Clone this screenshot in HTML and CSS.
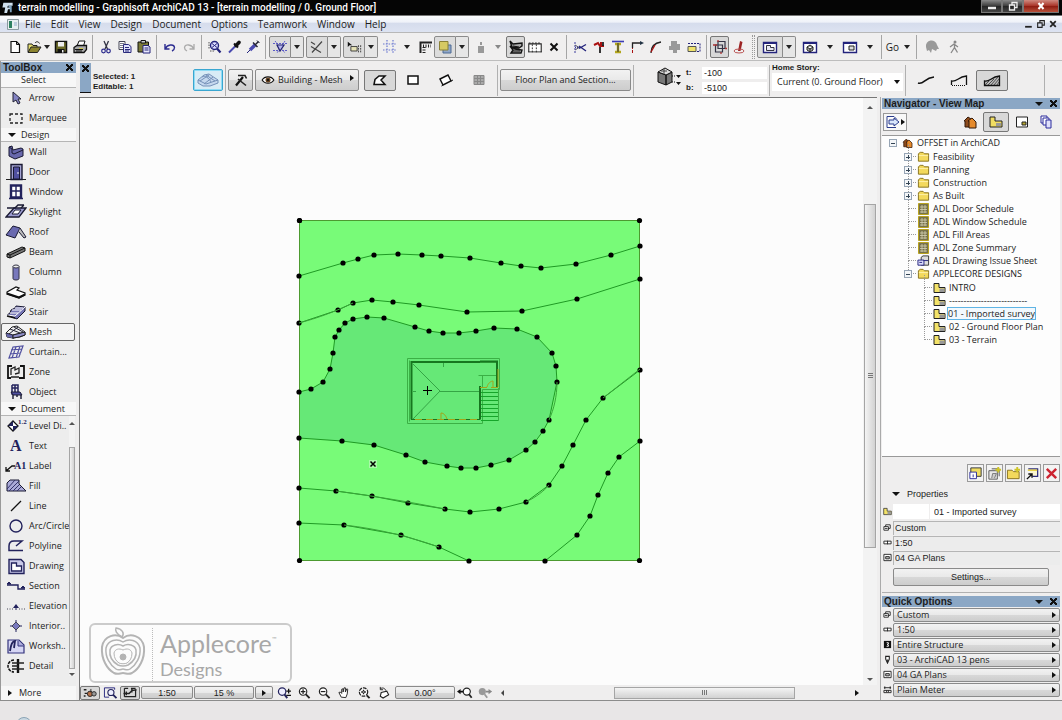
FILE: index.html
```html
<!DOCTYPE html>
<html lang="en">
<head>
  <meta charset="UTF-8" />
  <meta name="viewport" content="width=device-width, initial-scale=1.0" />
  <title>terrain modelling - Graphisoft ArchiCAD 13</title>
  <link rel="stylesheet" href="styles.css">
</head>
<body>
  <!-- icon sprite -->
  <svg class="sprite" width="0" height="0" aria-hidden="true">
    <defs>
      <symbol id="i-new" viewBox="0 0 16 16"><path d="M4 2.5h5.500l3 3v8H4z" fill="#fff" stroke="#111" stroke-width="1.200"/><path d="M9.500 2.500v3h3" fill="none" stroke="#111"/></symbol>
      <symbol id="i-open" viewBox="0 0 16 16"><path d="M2 13V5h4l1 1.500h4V8" fill="#e8e070" stroke="#222"/><path d="M2 13.500L5 8h10l-3.500 5.500z" fill="#8c8430" stroke="#222"/><path d="M9 4c1.500-2 3.500-1.500 4.500 0.500" fill="none" stroke="#222"/></symbol>
      <symbol id="i-save" viewBox="0 0 16 16"><path d="M2.500 2.500h11v11h-11z" fill="#6b6a28" stroke="#111" stroke-width="1.500"/><path d="M5 3h6v4.500H5z" fill="#eee"/><path d="M4.500 10h7v4h-7z" fill="#111"/><path d="M9 11h1.500v2.500H9z" fill="#eee"/></symbol>
      <symbol id="i-print" viewBox="0 0 16 16"><path d="M5 7l2-5h6l-1.500 5" fill="#fff" stroke="#111"/><path d="M2 8.500L5 6.500h9.500v4l-2.500 3H2z" fill="#aaa" stroke="#111" stroke-width="1.300"/><path d="M3 10.500h8M4 12h6" stroke="#111"/><path d="M7 9.500h4" stroke="#cfc84a"/></symbol>
      <symbol id="i-cut" viewBox="0 0 16 16"><path d="M6 2l3.500 8M10.500 2L7 10" stroke="#334" stroke-width="1.300"/><circle cx="5.500" cy="12" r="1.800" fill="none" stroke="#2a2a8c" stroke-width="1.200"/><circle cx="10.500" cy="12" r="1.800" fill="none" stroke="#2a2a8c" stroke-width="1.200"/></symbol>
      <symbol id="i-copy" viewBox="0 0 16 16"><path d="M2 2.500h6v8H2z" fill="#fff" stroke="#445"/><path d="M3 4.500h4M3 6.500h4M3 8.500h3" stroke="#778"/><path d="M6.500 5.500h5l2.500 2v6H6.500z" fill="#dfe0fb" stroke="#2a2a7c"/><path d="M8 8.500h4M8 10.500h5M8 12h4" stroke="#2a2a7c"/></symbol>
      <symbol id="i-paste" viewBox="0 0 16 16"><path d="M2 3h10.500v10H2z" fill="#7b7a38" stroke="#111"/><path d="M5 1.500h4.500v2.500H5z" fill="#ccc" stroke="#111"/><path d="M7 6.500h5l2 1.500v6H7z" fill="#e8e8fb" stroke="#23237c"/><path d="M8.500 9h4M8.500 11h4" stroke="#23237c"/></symbol>
      <symbol id="i-undo" viewBox="0 0 16 16"><path d="M3 5v5h4.500M3.500 9.500C5 5.500 12 4.500 12.500 8.500c0 2-1.500 3-2.500 3.500" fill="none" stroke="#2c2c90" stroke-width="1.400"/></symbol>
      <symbol id="i-redo" viewBox="0 0 16 16"><path d="M13 5v5H8.500M12.500 9.500C11 5.500 4 4.500 3.500 8.500c0 2 1.500 3 2.500 3.500" fill="none" stroke="#aaa" stroke-width="1.300"/></symbol>
      <symbol id="i-find" viewBox="0 0 16 16"><circle cx="7.500" cy="6.500" r="4" fill="#dcdcff" stroke="#23237c" stroke-width="1.400"/><path d="M10 9.500l3.500 4" stroke="#23237c" stroke-width="2.200"/><path d="M5 4.500l5 4M10 4.500l-5 4" stroke="#23237c"/><path d="M2 3v7M3 12h4" stroke="#555" stroke-dasharray="1.500 1"/></symbol>
      <symbol id="i-dropper" viewBox="0 0 16 16"><path d="M3 13.500l6-6" stroke="#4a4ab0" stroke-width="2"/><path d="M8 4.500l4 4" stroke="#111" stroke-width="2"/><path d="M10 6.500L13 3.500" stroke="#111" stroke-width="3.600" stroke-linecap="round"/></symbol>
      <symbol id="i-syringe" viewBox="0 0 16 16"><path d="M2 14l3-3" stroke="#23237c"/><path d="M5 11l5-5" stroke="#4a4ab0" stroke-width="3.400"/><path d="M8 3.500l4.500 4.500M10 6l3.500-3.500" stroke="#223" stroke-width="1.500"/><path d="M12 1.500l2.500 2.500" stroke="#223"/></symbol>
      <symbol id="i-guide" viewBox="0 0 16 16"><path d="M1 4.500h14M3 2l10 12M13 2L5 14M1 11.500h14" stroke="#5c5cc8" stroke-dasharray="2 1"/><path d="M5 6h7l-4 6z" fill="#b4b4ee" stroke="#222270" stroke-width="1.200"/></symbol>
      <symbol id="i-snap" viewBox="0 0 16 16"><path d="M2 7.500l10 6M3 13.500L13 2.500M2 3l4 2.500" fill="none" stroke="#444" stroke-width="1.200"/></symbol>
      <symbol id="i-ghost" viewBox="0 0 18 16"><path d="M2 2v6l2-2h3z" fill="#111"/><path d="M5.500 7.500h7v5h-7z" fill="#e7e4b8" stroke="#333"/><path d="M14 6v8M16.500 6v8" stroke="#333" stroke-dasharray="2 1"/></symbol>
      <symbol id="i-grid" viewBox="0 0 16 16"><path d="M5 1v14M11 1v14M1 5h14M1 11h14" stroke="#6a78d0" stroke-width="1.200" stroke-dasharray="1.500 1.300"/></symbol>
      <symbol id="i-ruler" viewBox="0 0 16 16"><path d="M3.500 14V3.500H15" fill="none" stroke="#222" stroke-width="2"/><path d="M6 7h8M7 8v6" fill="none" stroke="#222" stroke-dasharray="1 1.500" stroke-width="3"/></symbol>
      <symbol id="i-layers" viewBox="0 0 16 16"><path d="M6 6h8v8H6z" fill="#8fa6c8" stroke="#4c6a94"/><path d="M2.500 2.500h8.500v8.500H2.500z" fill="#d6c962" stroke="#8a8036"/></symbol>
      <symbol id="i-weight" viewBox="0 0 16 16"><path d="M5 7h6v7H5zM7 3h2v3H7z" fill="#999"/></symbol>
      <symbol id="i-roofs" viewBox="0 0 16 16"><path d="M2 2l3 3 9-1v3l-3 2-7-1zM2 7l5 3 7 1-1 3H3l2-3z" fill="#aaa" stroke="#111" stroke-width="1.400"/><path d="M5 7l6 1M4 12h8" stroke="#111"/></symbol>
      <symbol id="i-dims" viewBox="0 0 18 16"><path d="M2 14V4.500h14V14" fill="#fff" stroke="#222" stroke-width="1.200"/><path d="M2 3.500h14M6 5v9M10.500 5v9" stroke="#222" stroke-dasharray="2 1.500"/><path d="M1.500 13.500h15" stroke="#222"/></symbol>
      <symbol id="i-x" viewBox="0 0 16 16"><path d="M4.500 4.500l7 7M11.500 4.500l-7 7" stroke="#111" stroke-width="2"/></symbol>
      <symbol id="i-trim" viewBox="0 0 16 16"><path d="M3 3v11" stroke="#3b3b9c" stroke-dasharray="2 1"/><path d="M3 8.500h5" stroke="#3b3b9c" stroke-dasharray="1 1"/><path d="M7 9.500l7-4M7 7l7 5" stroke="#23237c" stroke-width="1.400"/><path d="M3 6l4 2.500-4 2.500" fill="none" stroke="#556"/></symbol>
      <symbol id="i-split" viewBox="0 0 16 16"><path d="M3 6l4-2 2 3h4M10 3v4" fill="none" stroke="#a11" stroke-width="2"/><path d="M9 8v6M12 3v4" stroke="#222" stroke-width="1.800"/></symbol>
      <symbol id="i-adjust" viewBox="0 0 16 16"><path d="M2 2.500h12" stroke="#3b3bb4" stroke-width="1.600"/><path d="M5 5h6M5 13h6M8 5v8" stroke="#b3a61c" stroke-width="2.400"/><path d="M8 4v9" stroke="#333"/></symbol>
      <symbol id="i-corner" viewBox="0 0 16 16"><path d="M3.500 14V4" stroke="#a11" stroke-dasharray="3 1"/><path d="M3.500 9V4h9" fill="none" stroke="#222" stroke-width="1.300"/><path d="M11 2l4 2-4 2z" fill="#234"/></symbol>
      <symbol id="i-fillet" viewBox="0 0 16 16"><path d="M3 14c0-6 3-10 10-11" fill="none" stroke="#222" stroke-width="1.300"/><path d="M3 13L7 6" stroke="#a11" stroke-width="1.300"/></symbol>
      <symbol id="i-solid" viewBox="0 0 16 16"><path d="M4 2h6v3h3v6h-3v3H6v-3H2V7h2z" fill="#999"/></symbol>
      <symbol id="i-stretch" viewBox="0 0 16 16"><path d="M2 7.500h8v5H2z" fill="#f0e36a" stroke="#555"/><path d="M2 4.500h12v8h-3" fill="none" stroke="#23237c" stroke-dasharray="2 1"/></symbol>
      <symbol id="i-group" viewBox="0 0 16 16"><path d="M6 2.500h7v7H6zM3.500 6h7v7h-7z" fill="none" stroke="#334" stroke-width="1.200"/><path d="M1 6h4M9 13v2M13 9.500h2M6 1v2" stroke="#a33" stroke-width="1.300"/></symbol>
      <symbol id="i-pen" viewBox="0 0 16 16"><path d="M7 12l2-10 2.500 1-2 9z" fill="#9c2222"/><ellipse cx="8" cy="12" rx="5" ry="2" fill="none" stroke="#b55"/></symbol>
      <symbol id="i-plan" viewBox="0 0 18 16"><path d="M2.500 3.500h13v10h-13z" fill="#fff" stroke="#23237c" stroke-width="1.400"/><path d="M2 4h14" stroke="#23237c" stroke-width="2"/><path d="M5.500 11.500v-5h4v2h3.500v3z" fill="#e6e6f4" stroke="#334"/></symbol>
      <symbol id="i-view3d" viewBox="0 0 18 16"><path d="M2.500 3.500h13v10h-13z" fill="#fff" stroke="#23237c" stroke-width="1.400"/><path d="M2 4h14" stroke="#23237c" stroke-width="2"/><path d="M6 8l3-2 3 2v3l-3 2-3-2zM6 8l3 2 3-2M9 10v3" fill="#aaa" stroke="#222"/></symbol>
      <symbol id="i-layout" viewBox="0 0 18 16"><path d="M2.500 3.500h13v10h-13z" fill="#fff" stroke="#23237c" stroke-width="1.400"/><path d="M2 4h14" stroke="#23237c" stroke-width="2"/><path d="M8 7h5v4H8z" fill="#ddd" stroke="#222"/></symbol>
      <symbol id="i-orbit" viewBox="0 0 16 16"><path d="M2 8a5.500 5.500 0 0 1 11-2l2 4h-2l-1 2-4-2-1 4-2-3-2 1z" fill="#999"/></symbol>
      <symbol id="i-walk" viewBox="0 0 16 16"><circle cx="9" cy="3" r="1.500" fill="#888"/><path d="M8.500 4.500v4l3 5M8.500 8.500L5 14M4 8l4-3 4 3" fill="none" stroke="#888" stroke-width="1.300"/></symbol>

      <symbol id="i-mesh" viewBox="0 0 22 16"><path d="M1 9l6-6 5-1 8 6v3l-5 2-7 1-6-1z" fill="#eee" stroke="#222"/><path d="M1 9l7 2v3l-6-1z" fill="#6868ac"/><path d="M1 9l7 2 12-3M5 5l10 4M9 3l9 5M4 10l9-7M8 11v4" fill="none" stroke="#223"/><path d="M8 11l12-3v3l-6 2-6 1z" fill="#8d8dc8" stroke="#222"/></symbol>
      <symbol id="i-meshbig" viewBox="0 0 22 16"><path d="M1 8l6-5 5-1 9 6v3l-8 3-7 0-5-3z" fill="#c5d8ee" stroke="#7591b8"/><path d="M1 8l8 4 12-4M5 5c3-2 7 1 9 5M9 3l9 6M3 9l9-6M7 12l9-7" fill="none" stroke="#7591b8"/></symbol>
      <symbol id="i-wand" viewBox="0 0 16 16"><path d="M3 13.500L10 5" stroke="#111" stroke-width="2.200"/><path d="M5 3.500h7l1.500 3M5 7l8 6.500" fill="none" stroke="#222" stroke-width="1.600"/></symbol>
      <symbol id="i-eye" viewBox="0 0 16 12"><path d="M1 6c3-5 11-5 14 0-3 5-11 5-14 0z" fill="#fff" stroke="#111" stroke-width="1.400"/><circle cx="8" cy="6" r="3" fill="#6a4420"/><circle cx="8" cy="6" r="1.400" fill="#111"/></symbol>
      <symbol id="i-poly" viewBox="0 0 18 16"><path d="M3 12.500l1-5 4-3.500h6l-4 4 4 4.500z" fill="#fff" stroke="#111" stroke-width="1.500"/></symbol>
      <symbol id="i-rect" viewBox="0 0 18 16"><path d="M4 4h10v8H4z" fill="#fff" stroke="#111" stroke-width="1.500"/></symbol>
      <symbol id="i-rot" viewBox="0 0 18 16"><path d="M3 7l8-4 3 6-8 4z" fill="#fff" stroke="#111" stroke-width="1.400"/><path d="M14 9l2-1M6 13l-1.500 1" stroke="#111"/></symbol>
      <symbol id="i-table" viewBox="0 0 18 16"><path d="M4 3.500h10v9H4z" fill="#aaa" stroke="#888"/><path d="M7.500 4v8M10.500 4v8M4 6.500h10M4 9.500h10" stroke="#888"/></symbol>
      <symbol id="i-block" viewBox="0 0 26 20"><path d="M2 6l8 3v10l-8-3zM10 9l6-3v10l-6 3z" fill="#777" stroke="#111"/><path d="M2 6l7-4 7 4-6 3z" fill="#ddd" stroke="#111"/><path d="M5 5h6M8 3v5" stroke="#444"/><path d="M16 10h4M16 16h4" stroke="#111" stroke-dasharray="1 1"/><path d="M20 9h5l-2.500 3zM20 16h5l-2.500 3z" fill="#111"/></symbol>
      <symbol id="i-curve" viewBox="0 0 18 16"><path d="M1 11c6 2 6-5 16-6" fill="none" stroke="#111" stroke-width="1.600"/></symbol>
      <symbol id="i-skirt" viewBox="0 0 18 16"><path d="M1.500 13V9c6 1 6-4 15-5v9" fill="none" stroke="#111" stroke-width="1.300"/><path d="M2 13.500h14" stroke="#111" stroke-dasharray="1 1"/></symbol>
      <symbol id="i-solidmesh" viewBox="0 0 18 16"><path d="M1.500 13.500V9c6 1 6-4 15-5v9.500z" fill="#bbb" stroke="#111" stroke-width="1.300"/><path d="M2 13l4-4M5 13l6-6M8 13l7-8M11 13l5-6M14 13l2-3" stroke="#333" stroke-width=".8"/></symbol>

      <symbol id="t-arrow" viewBox="0 0 22 18"><path d="M8 3v10l3-2 2 4 2-1-2-4h3z" fill="#8484c4" stroke="#223"/></symbol>
      <symbol id="t-marquee" viewBox="0 0 22 18"><path d="M5 5h12v9H5z" fill="none" stroke="#222" stroke-width="1.300" stroke-dasharray="3 2"/></symbol>
      <symbol id="t-wall" viewBox="0 0 22 18"><path d="M4 4l3-1 1 4 8-2 2 1v7l-8 3-6-3z" fill="#6868ac" stroke="#191932"/><path d="M4 4l3 2v4l2 1 9-4" fill="none" stroke="#191932"/></symbol>
      <symbol id="t-door" viewBox="0 0 22 18"><path d="M1 16.500h20" stroke="#222"/><path d="M6 1.500h11v15H6z" fill="#a5a5d4" stroke="#191932" stroke-width="1.400"/><path d="M8.500 4h6v12h-6z" fill="#5050a0" stroke="#191932"/><path d="M13 9v2" stroke="#eee"/></symbol>
      <symbol id="t-window" viewBox="0 0 22 18"><path d="M6 2.500h10v12H6z" fill="#fff" stroke="#22225c" stroke-width="2.400"/><path d="M11 3v11M6 8h10M4 15.500h14" stroke="#22225c" stroke-width="1.400"/></symbol>
      <symbol id="t-skylight" viewBox="0 0 22 18"><path d="M1 14l8-9h12l-7 9z" fill="#9c9cd0" stroke="#191932" stroke-width="1.300"/><path d="M7 11l3-4h6l-3 4z" fill="#fff" stroke="#191932"/><path d="M2 5h8l3-3h6M16 5l3-3" fill="none" stroke="#191932" stroke-width="1.400"/></symbol>
      <symbol id="t-roof" viewBox="0 0 22 18"><path d="M1 12l7-9 7 2-5 10z" fill="#6a6ab0" stroke="#191932"/><path d="M15 5l6 9-2 1-5-6" fill="#bbb" stroke="#191932"/></symbol>
      <symbol id="t-beam" viewBox="0 0 22 18"><path d="M2 11L17 4l3 1v3L5 15l-3-1z" fill="#777" stroke="#111"/><path d="M2 11l3 1 15-7M5 12v3" fill="none" stroke="#111"/></symbol>
      <symbol id="t-column" viewBox="0 0 22 18"><path d="M8 3.500v12c0 2 6 2 6 0v-12z" fill="#7878bc" stroke="#334"/><ellipse cx="11" cy="3.500" rx="3" ry="1.500" fill="#eee" stroke="#334"/></symbol>
      <symbol id="t-slab" viewBox="0 0 22 18"><path d="M2 9l9-5 3 1-2 2 8 3v2l-6 3L2 11z" fill="#fff" stroke="#111" stroke-width="1.200"/><path d="M2 10.500l12 4 6-3" fill="none" stroke="#111" stroke-width="2"/></symbol>
      <symbol id="t-stair" viewBox="0 0 22 18"><path d="M2 12l3-2 1-3 4-2 1-2 9 1v4l-8 8z" fill="#7676b4" stroke="#191932"/><path d="M2 12l8 1 10-9M5 10l8 0M7 7l9 0M10 5l8 0" stroke="#fff" fill="none"/><path d="M2 13l8 2" stroke="#111" stroke-width="1.400"/></symbol>
      <symbol id="t-curtain" viewBox="0 0 22 18"><path d="M4 15L8 4l10-1-4 11zM7 15l4-11M11 15l4-12M5 11l11-1M6 7l11-1" fill="none" stroke="#5050a0" stroke-width="1.200"/></symbol>
      <symbol id="t-zone" viewBox="0 0 22 18"><path d="M7 3H3v12h3M15 3h4v12h-5" fill="none" stroke="#111" stroke-width="1.800"/><path d="M6 12V6l4-2v3l4-2v5l-4 1M6 14h8" fill="none" stroke="#222" stroke-width="1.300"/></symbol>
      <symbol id="t-object" viewBox="0 0 22 18"><path d="M7 2v9h9M7 2h6v7M10 2v8M7 5h6" fill="none" stroke="#22225c" stroke-width="1.500"/><path d="M6 9h9l2 3H8z" fill="#5050a0" stroke="#191932"/><path d="M8 12v4M16 12v4M12 12v2" stroke="#191932" stroke-width="1.400"/></symbol>
      <symbol id="t-level" viewBox="0 0 22 18"><path d="M8 4l5 5-5 5-5-5z" fill="#fff" stroke="#111" stroke-width="1.300"/><path d="M8 4v5H3zM8 14V9h5z" fill="#22225c"/><text x="13" y="7" class="glyph-sm">1.2</text></symbol>
      <symbol id="t-text" viewBox="0 0 22 18"><text x="5" y="14" class="glyph-lg">A</text></symbol>
      <symbol id="t-label" viewBox="0 0 22 18"><path d="M1 14l6-5h3M1 10v4h4" fill="none" stroke="#111" stroke-width="1.300"/><text x="9" y="12" class="glyph-md">A1</text></symbol>
      <symbol id="t-fill" viewBox="0 0 22 18"><path d="M2 14V6l3-3h9v4l7 7z" fill="#a9a9d8" stroke="#191932"/><path d="M2 12l8-9M4 14L14 4M8 14l6-6M12 14l4-4" stroke="#33336c"/></symbol>
      <symbol id="t-line" viewBox="0 0 22 18"><path d="M6 14L16 4" stroke="#111" stroke-width="1.300"/></symbol>
      <symbol id="t-arc" viewBox="0 0 22 18"><circle cx="11" cy="9" r="6" fill="none" stroke="#22225c" stroke-width="1.400"/></symbol>
      <symbol id="t-polyline" viewBox="0 0 22 18"><path d="M18 13.500H4V9c0-3 2-5 5-5h8l-6 5" fill="none" stroke="#22225c" stroke-width="1.500"/></symbol>
      <symbol id="t-drawing" viewBox="0 0 22 18"><path d="M4 2.500h12l3 3v11H4z" fill="#c9c9e8" stroke="#22225c" stroke-width="1.400"/><path d="M6.500 6h5v3h5v5h-10z" fill="#fff" stroke="#22225c" stroke-width="1.300"/></symbol>
      <symbol id="t-section" viewBox="0 0 22 18"><path d="M2 8h11v4h7" fill="none" stroke="#22225c" stroke-width="1.400"/><path d="M2 7l2-2 2 2zM16 11l2-2 2 2z" fill="#22225c" stroke="#22225c"/></symbol>
      <symbol id="t-elev" viewBox="0 0 22 18"><path d="M2 12h6M14 12h6" stroke="#445" stroke-dasharray="1 1.500"/><path d="M8 11l3-4 3 4z" fill="#22225c"/><path d="M11 11v2" stroke="#22225c"/></symbol>
      <symbol id="t-interior" viewBox="0 0 22 18"><path d="M11 3v12M5 9h12" stroke="#22225c"/><path d="M11 5l4 4-4 4-4-4z" fill="#7878bc" stroke="#445"/></symbol>
      <symbol id="t-work" viewBox="0 0 22 18"><path d="M3 3h11l5 5v8H3z" fill="#d6d6f4" stroke="#33337c" stroke-width="1.200"/><path d="M5 14c1-7 3-10 5-10l-1 7" fill="none" stroke="#22225c" stroke-width="1.800"/><path d="M13 4v5h6" fill="#aaaadd" stroke="#33337c"/></symbol>
      <symbol id="t-detail" viewBox="0 0 22 18"><path d="M13 2v14" stroke="#111" stroke-width="2.400"/><path d="M9 3a6 6 0 0 0 0 12" fill="none" stroke="#111" stroke-width="1.500" stroke-dasharray="3 1"/><path d="M7 6h12M7 9h6M7 12h12" stroke="#222" stroke-width="1.500"/></symbol>

      <symbol id="n-out" viewBox="0 0 16 16"><path d="M2 2.500h7l3 3M2 2.500v11h9" fill="#fff" stroke="#2b3c8c"/><path d="M4 6h5V4l5 4-5 4v-2H4z" fill="#d9e6fb" stroke="#2b3c8c"/></symbol>
      <symbol id="n-house" viewBox="0 0 16 16"><path d="M2 7l4-4 3 2v8H3V7z" fill="#8c4a1c" stroke="#331808"/><path d="M6 7l4-3 4 4v6H7V7z" fill="#e58a2c" stroke="#331808"/></symbol>
      <symbol id="n-viewmap" viewBox="0 0 16 16"><path d="M2 3h5v4h7v6H2z" fill="#f0dd62" stroke="#222"/><path d="M8 9h5v3H8z" fill="#999"/></symbol>
      <symbol id="n-layout" viewBox="0 0 16 16"><path d="M2.500 3h11v10h-11z" fill="#fff" stroke="#222"/><path d="M8 8h4v3H8z" fill="#ba3" stroke="#222"/></symbol>
      <symbol id="n-pub" viewBox="0 0 16 16"><path d="M2 2h6v7H2z" fill="#fff" stroke="#2b2b9c"/><path d="M4 4h6v7H4z" fill="#fff" stroke="#2b2b9c"/><path d="M7 6h5v8H7z" fill="#e0e0fb" stroke="#2b2b9c"/></symbol>
      <symbol id="n-folder" viewBox="0 0 14 12"><path d="M1.500 10.500v-8l2-1.500h3L8 2.500h4.500v8z" fill="#f3d95c" stroke="#86701c"/><path d="M2 4.500h10" stroke="#fff3b0"/></symbol>
      <symbol id="n-sched" viewBox="0 0 12 12"><path d="M1 .5h10v11H1z" fill="#77724a" stroke="#b9a31f"/><path d="M4.500 2v8M7.500 2v8M2.500 4h7M2.500 6.500h7M2.500 9h7" stroke="#d6d2b4" stroke-width=".8"/></symbol>
      <symbol id="n-sheet" viewBox="0 0 14 12"><path d="M4.500 2l2-1.500h6v10h-8z" fill="#ddd" stroke="#333"/><path d="M1 5h6.500v5.500H1z" fill="#dcdcfb" stroke="#22227c"/><path d="M2.500 7.500h3M7 5.500h5" stroke="#22227c"/></symbol>
      <symbol id="n-view" viewBox="0 0 13 12"><path d="M1 1.500h5v4h6v5H1z" fill="#f3e268" stroke="#222"/><path d="M6.500 6.500h5v3.500h-5z" fill="#999"/></symbol>
      <symbol id="n-new1" viewBox="0 0 16 16"><path d="M3 2h11v9h-5V8H3z" fill="#f0dd62" stroke="#333"/><path d="M2 6.500h7v7H2z" fill="#fff" stroke="#2b2b9c"/><path d="M5.500 9v3" stroke="#2b2b9c"/></symbol>
      <symbol id="n-new2" viewBox="0 0 16 16"><path d="M2 5h9v9H2zM5 3h8v8" fill="#e8e8e8" stroke="#555"/><path d="M5 13l1-5 4 0-2 5" fill="#ccc" stroke="#777"/><path d="M12 1v6M9 4h6" stroke="#cfc526" stroke-width="2"/></symbol>
      <symbol id="n-new3" viewBox="0 0 16 16"><path d="M1.500 13.500v-9h5L8 6h6v7.500z" fill="#f3d95c" stroke="#86701c"/><path d="M12 1v6M9 4h6" stroke="#cfc526" stroke-width="2"/></symbol>
      <symbol id="n-new4" viewBox="0 0 16 16"><path d="M3.500 3h10v8H8" fill="#fbf6d0" stroke="#2b2b7c" stroke-width="1.300"/><path d="M3 4.500h10" stroke="#e6cf3a" stroke-width="1.500"/><path d="M2 14l5-5M3.500 8.500h4v4" fill="none" stroke="#111" stroke-width="1.500"/></symbol>
      <symbol id="n-del" viewBox="0 0 16 16"><path d="M3 3l10 10M13 3L3 13" stroke="#cc2431" stroke-width="2.600"/></symbol>
      <symbol id="q-layer" viewBox="0 0 10 10"><path d="M1 4h5v4H1zM3 4V2h5v4H6" fill="#fff" stroke="#222"/><path d="M2 6h3" stroke="#222"/></symbol>
      <symbol id="q-scale" viewBox="0 0 10 10"><path d="M1 3.500h8v3H1zM5 3v4" fill="#fff" stroke="#222"/></symbol>
      <symbol id="q-struct" viewBox="0 0 10 10"><path d="M1 1h8v8H1z" fill="#111"/><path d="M4 3h2v1.500H5v1h1V7H4" fill="none" stroke="#fff"/></symbol>
      <symbol id="q-pen" viewBox="0 0 10 10"><path d="M3 1.500h4v3L5 9 3 4.500z" fill="#fff" stroke="#222" stroke-width="1.200"/><path d="M5 5v3" stroke="#222"/></symbol>
      <symbol id="q-model" viewBox="0 0 10 10"><path d="M1 1.500h8v7H1z" fill="#fff" stroke="#222"/><path d="M3 4h4v2.500H3z" fill="#bbb" stroke="#222"/></symbol>
      <symbol id="q-dim" viewBox="0 0 10 10"><path d="M1 3h8M1 6h8v2.500H1zM2 1.500v3M8 1.500v3M4 6v2M6 6v2" fill="none" stroke="#222"/></symbol>

      <symbol id="b-trace" viewBox="0 0 18 14"><path d="M2 4h3M3 8h3M2 11h2" stroke="#222" stroke-width="1.600"/><circle cx="9" cy="8.500" r="3" fill="#b77048" stroke="#222"/><circle cx="13.500" cy="8.500" r="2.500" fill="#999" stroke="#222"/><path d="M10 3v4" stroke="#222"/></symbol>
      <symbol id="b-zoomwin" viewBox="0 0 16 14"><path d="M7 12H2V2h11v2" fill="none" stroke="#22227c"/><circle cx="9" cy="7" r="3.300" fill="#eef" stroke="#22225c" stroke-width="1.200"/><path d="M11.500 9.500L15 13" stroke="#22225c" stroke-width="2"/></symbol>
      <symbol id="b-quick" viewBox="0 0 16 14"><path d="M2 2.500h4M2 11.500h12V4M2 2.500v9M9 2.500h5" fill="none" stroke="#222" stroke-width="1.300"/><path d="M1 8h6l3-3 5-1M4 6v4M10 3v4" fill="none" stroke="#222" stroke-width="1.500"/></symbol>
      <symbol id="b-zoom" viewBox="0 0 16 14"><circle cx="6" cy="6" r="4" fill="#eef" stroke="#22225c" stroke-width="1.300"/><path d="M8.500 9l3 4" stroke="#22225c" stroke-width="2"/><path d="M13 3v5M10.500 5.500h5M10.500 10h5" stroke="#111" stroke-width="1.400"/></symbol>
      <symbol id="b-in" viewBox="0 0 16 14"><circle cx="7" cy="6" r="4" fill="#fff" stroke="#222" stroke-width="1.200"/><path d="M10 9l4 4" stroke="#222" stroke-width="2"/><path d="M7 3.500v5M4.500 6h5" stroke="#222" stroke-width="1.300"/></symbol>
      <symbol id="b-out" viewBox="0 0 16 14"><circle cx="7" cy="6" r="4" fill="#fff" stroke="#222" stroke-width="1.200"/><path d="M10 9l4 4" stroke="#222" stroke-width="2"/><path d="M4.500 6h5" stroke="#222" stroke-width="1.300"/></symbol>
      <symbol id="b-pan" viewBox="0 0 16 14"><path d="M5 12L2.500 7l1.500-.5L5.500 8V3.500L7 3v3.500L8 2h1.500v4.500L11 3l1 .5-.5 5-1.500 4z" fill="#fff" stroke="#222"/></symbol>
      <symbol id="b-fit" viewBox="0 0 16 14"><circle cx="7.500" cy="6.500" r="4.500" fill="#fff" stroke="#222" stroke-width="1.300" stroke-dasharray="4 1"/><path d="M7.500 4v5M5 6.500h5" stroke="#222" stroke-dasharray="2 1" stroke-width="1.500"/><path d="M11 10l3 3" stroke="#222" stroke-width="2"/></symbol>
      <symbol id="b-rot" viewBox="0 0 16 14"><path d="M5 7l6-1.500 2 4L7 13l-3-2z" fill="#fff" stroke="#222" stroke-width="1.200"/><path d="M10 5C9 2 6 1.500 4 3M4 1v3h3" fill="none" stroke="#222"/></symbol>
      <symbol id="b-prev" viewBox="0 0 18 14"><circle cx="11" cy="6" r="4" fill="#fff" stroke="#222" stroke-width="1.300"/><path d="M13.500 9l3 4" stroke="#222" stroke-width="2"/><path d="M0 6l4-3v2h3v2H4v2z" fill="#111"/></symbol>
      <symbol id="b-next" viewBox="0 0 18 14"><circle cx="6" cy="6" r="4" fill="#999"/><path d="M8.500 9l3 4" stroke="#999" stroke-width="2"/><path d="M17 6l-4-3v2h-3v2h3v2z" fill="#888"/></symbol>
    </defs>
  </svg>

  <header class="titlebar">
    <svg class="app-icon" viewBox="0 0 14 14"><path d="M2 2h10v3H7l-1 2h4v2H7l-1 4H3l1-6H1z" fill="#cfe0ee"/><path d="M7 5h4v7H9V8z" fill="#7fa3bf"/></svg>
    <h1>terrain modelling - Graphisoft ArchiCAD 13 - [terrain modelling / 0. Ground Floor]</h1>
    <div class="win-buttons">
      <button class="win" aria-label="Minimise"><svg viewBox="0 0 12 10"><path d="M2 7h8" stroke="#eee" stroke-width="2.500"/></svg></button>
      <button class="win" aria-label="Restore"><svg viewBox="0 0 12 10"><path d="M2.500 4h5v5h-5zM5 3.500V1.500h5v5H8" fill="none" stroke="#eee" stroke-width="1.300"/></svg></button>
      <button class="win win-close" aria-label="Close"><svg viewBox="0 0 12 10"><path d="M3.500 2l5 6M8.500 2l-5 6" stroke="#fff" stroke-width="2"/></svg></button>
    </div>
  </header>

  <nav class="menubar">
    <svg class="doc-icon" viewBox="0 0 12 11"><path d="M.5 .5h11v10H.5z" fill="#e6eef0" stroke="#8a9aa0"/><path d="M2 2h3v7H2z" fill="#2c8060"/><path d="M7 3h3v4H7z" fill="#bcd"/></svg>
    <a href="#">File</a><a href="#">Edit</a><a href="#">View</a><a href="#">Design</a><a href="#">Document</a><a href="#">Options</a><a href="#">Teamwork</a><a href="#">Window</a><a href="#">Help</a>
    <div class="mdi">
      <button aria-label="Minimise document"><svg viewBox="0 0 9 9"><path d="M1 7h6" stroke="#222" stroke-width="1.600"/></svg></button>
      <button aria-label="Restore document"><svg viewBox="0 0 9 9"><path d="M1.500 3.500h4v4h-4zM3.500 3V1.500h4v4H6" fill="none" stroke="#222"/></svg></button>
      <button aria-label="Close document"><svg viewBox="0 0 9 9"><path d="M2 2l5 5M7 2L2 7" stroke="#222" stroke-width="1.600"/></svg></button>
    </div>
  </nav>

  <div class="toolbar" role="toolbar" aria-label="Standard">
    <button class="tb" aria-label="New"><svg><use href="#i-new"/></svg></button>
    <button class="tb" aria-label="Open"><svg><use href="#i-open"/></svg></button>
    <button class="drop slim" aria-label="Open recent"></button>
    <button class="tb" aria-label="Save"><svg><use href="#i-save"/></svg></button>
    <button class="tb" aria-label="Print"><svg><use href="#i-print"/></svg></button>
    <span class="sep"></span>
    <button class="tb" aria-label="Cut"><svg><use href="#i-cut"/></svg></button>
    <button class="tb" aria-label="Copy"><svg><use href="#i-copy"/></svg></button>
    <button class="tb" aria-label="Paste"><svg><use href="#i-paste"/></svg></button>
    <span class="sep"></span>
    <button class="tb" aria-label="Undo"><svg><use href="#i-undo"/></svg></button>
    <button class="tb" aria-label="Redo"><svg><use href="#i-redo"/></svg></button>
    <span class="sep"></span>
    <button class="tb" aria-label="Find and select"><svg><use href="#i-find"/></svg></button>
    <button class="tb" aria-label="Pick up parameters"><svg><use href="#i-dropper"/></svg></button>
    <button class="tb" aria-label="Inject parameters"><svg><use href="#i-syringe"/></svg></button>
    <span class="sep"></span>
    <div class="split"><button class="tb" aria-label="Guide lines"><svg><use href="#i-guide"/></svg></button><button class="drop" aria-label="Guide line options"></button></div>
    <div class="split"><button class="tb" aria-label="Snap points"><svg><use href="#i-snap"/></svg></button><button class="drop" aria-label="Snap options"></button></div>
    <div class="split"><button class="tb" aria-label="Tracker"><svg><use href="#i-ghost"/></svg></button><button class="drop" aria-label="Tracker options"></button></div>
    <button class="tb" aria-label="Grid"><svg><use href="#i-grid"/></svg></button>
    <button class="drop loose" aria-label="Grid options"></button>
    <button class="tb" aria-label="Rulers"><svg><use href="#i-ruler"/></svg></button>
    <div class="split"><button class="tb" aria-label="Trace"><svg><use href="#i-layers"/></svg></button><button class="drop" aria-label="Trace options"></button></div>
    <button class="tb" aria-label="Gravity" disabled><svg><use href="#i-weight"/></svg></button>
    <button class="drop loose" aria-label="Gravity options" disabled></button>
    <button class="tb on" aria-label="Suspend groups"><svg><use href="#i-roofs"/></svg></button>
    <button class="tb" aria-label="Dimensions"><svg><use href="#i-dims"/></svg></button>
    <button class="tb" aria-label="Cancel"><svg><use href="#i-x"/></svg></button>
    <span class="sep"></span>
    <button class="tb" aria-label="Trim"><svg><use href="#i-trim"/></svg></button>
    <button class="tb" aria-label="Split"><svg><use href="#i-split"/></svg></button>
    <button class="tb" aria-label="Adjust"><svg><use href="#i-adjust"/></svg></button>
    <button class="tb" aria-label="Intersect"><svg><use href="#i-corner"/></svg></button>
    <button class="tb" aria-label="Fillet"><svg><use href="#i-fillet"/></svg></button>
    <button class="tb" aria-label="Solid operations" disabled><svg><use href="#i-solid"/></svg></button>
    <button class="tb" aria-label="Resize"><svg><use href="#i-stretch"/></svg></button>
    <span class="sep"></span>
    <button class="tb on" aria-label="Group"><svg><use href="#i-group"/></svg></button>
    <button class="tb" aria-label="Magic pen"><svg><use href="#i-pen"/></svg></button>
    <span class="grip"></span>
    <div class="split wide"><button class="tb" aria-label="Floor plan"><svg><use href="#i-plan"/></svg></button><button class="drop" aria-label="Floor plan options"></button></div>
    <button class="tb big" aria-label="3D window"><svg><use href="#i-view3d"/></svg></button>
    <button class="drop loose" aria-label="3D options"></button>
    <button class="tb big" aria-label="Layout"><svg><use href="#i-layout"/></svg></button>
    <button class="drop loose" aria-label="Layout options"></button>
    <span class="sep"></span>
    <button class="go">Go</button>
    <button class="drop" aria-label="Go options"></button>
    <span class="sep"></span>
    <button class="tb big" aria-label="Orbit" disabled><svg><use href="#i-orbit"/></svg></button>
    <button class="tb" aria-label="Explore" disabled><svg><use href="#i-walk"/></svg></button>
  </div>

  <div class="workspace">
    <aside class="toolbox">
      <div class="panel-title"><h2>ToolBox</h2><button class="close" aria-label="Close toolbox"></button></div>
      <h3 class="tool-head first">Select</h3>
      <button class="tool"><svg><use href="#t-arrow"/></svg>Arrow</button>
      <button class="tool"><svg><use href="#t-marquee"/></svg>Marquee</button>
      <h3 class="tool-head"><span class="tri-down"></span>Design</h3>
      <button class="tool"><svg><use href="#t-wall"/></svg>Wall</button>
      <button class="tool"><svg><use href="#t-door"/></svg>Door</button>
      <button class="tool"><svg><use href="#t-window"/></svg>Window</button>
      <button class="tool"><svg><use href="#t-skylight"/></svg>Skylight</button>
      <button class="tool"><svg><use href="#t-roof"/></svg>Roof</button>
      <button class="tool"><svg><use href="#t-beam"/></svg>Beam</button>
      <button class="tool"><svg><use href="#t-column"/></svg>Column</button>
      <button class="tool"><svg><use href="#t-slab"/></svg>Slab</button>
      <button class="tool"><svg><use href="#t-stair"/></svg>Stair</button>
      <button class="tool active"><svg><use href="#i-mesh"/></svg>Mesh</button>
      <button class="tool"><svg><use href="#t-curtain"/></svg>Curtain...</button>
      <button class="tool"><svg><use href="#t-zone"/></svg>Zone</button>
      <button class="tool"><svg><use href="#t-object"/></svg>Object</button>
      <h3 class="tool-head"><span class="tri-down"></span>Document</h3>
      <div class="tool-scroll">
        <div class="tool-list">
          <button class="tool"><svg><use href="#t-level"/></svg>Level Di..</button>
          <button class="tool"><svg><use href="#t-text"/></svg>Text</button>
          <button class="tool"><svg><use href="#t-label"/></svg>Label</button>
          <button class="tool"><svg><use href="#t-fill"/></svg>Fill</button>
          <button class="tool"><svg><use href="#t-line"/></svg>Line</button>
          <button class="tool"><svg><use href="#t-arc"/></svg>Arc/Circle</button>
          <button class="tool"><svg><use href="#t-polyline"/></svg>Polyline</button>
          <button class="tool"><svg><use href="#t-drawing"/></svg>Drawing</button>
          <button class="tool"><svg><use href="#t-section"/></svg>Section</button>
          <button class="tool"><svg><use href="#t-elev"/></svg>Elevation</button>
          <button class="tool"><svg><use href="#t-interior"/></svg>Interior..</button>
          <button class="tool"><svg><use href="#t-work"/></svg>Worksh..</button>
          <button class="tool"><svg><use href="#t-detail"/></svg>Detail</button>
        </div>
        <div class="vscroll mini"><span class="tri-up"></span><span class="thumb"></span><span class="tri-down small"></span></div>
      </div>
      <h3 class="tool-head more"><span class="tri-right"></span>More</h3>
    </aside>

    <div class="main">
      <section class="infobox">
        <div class="strip"><button class="close" aria-label="Close info box"></button></div>
        <p class="counts">Selected: 1<br>Editable: 1</p>
        <button class="btn default" aria-label="Mesh settings"><svg><use href="#i-meshbig"/></svg></button>
        <span class="vsep"></span>
        <button class="btn wand" aria-label="Favorites"><svg><use href="#i-wand"/></svg></button>
        <button class="btn layer"><svg><use href="#i-eye"/></svg>Building - Mesh<span class="tri-right"></span></button>
        <div class="geometry">
          <button class="shape on" aria-label="Polygonal"><svg><use href="#i-poly"/></svg></button>
          <button class="shape" aria-label="Rectangular"><svg><use href="#i-rect"/></svg></button>
          <button class="shape" aria-label="Rotated rectangular"><svg><use href="#i-rot"/></svg></button>
          <button class="shape" aria-label="Regular sloped" disabled><svg><use href="#i-table"/></svg></button>
        </div>
        <span class="vsep"></span>
        <button class="btn section">Floor Plan and Section...</button>
        <span class="vsep"></span>
        <svg class="block"><use href="#i-block"/></svg>
        <div class="levels">
          <label for="top">t:</label><input id="top" type="text" value="-100">
          <label for="bottom">b:</label><input id="bottom" type="text" value="-5100">
        </div>
        <span class="vsep"></span>
        <div class="story">
          <label for="story">Home Story:</label>
          <div class="select-wrap"><select id="story"><option>Current (0. Ground Floor)</option></select></div>
        </div>
        <span class="vsep"></span>
        <div class="geometry surface">
          <button class="shape" aria-label="Surface only"><svg><use href="#i-curve"/></svg></button>
          <button class="shape" aria-label="With skirt"><svg><use href="#i-skirt"/></svg></button>
          <button class="shape on" aria-label="Solid body"><svg><use href="#i-solidmesh"/></svg></button>
        </div>
        <span class="vsep"></span>
      </section>

      <div class="stage">
        <section class="view">
          <div class="view-row">
            <div class="canvas">
              <svg class="plan">
                <defs>
                  <marker id="node" markerUnits="userSpaceOnUse" markerWidth="8" markerHeight="8" refX="4" refY="4"><circle cx="4" cy="4" r="2.600" fill="#000"/></marker>
                </defs>
                <g transform="translate(-80 -98)" fill="none">
                  <rect x="299.500" y="220.500" width="340" height="340" class="terrain"/>
                  <path class="plateau" d="M299 392L311 389 323 382 330 369 333 353 335 337 339 330 345 323 353 319 367 317 384 318 415 327 429 331 443 333 459 333 476 331 494 328 517 329 537 337 552 353 556 366 557 382 549 420 543 431 535 442 526 450 509 460 491 465 476 468 461 468 447 466 425 462 406 455 374 445 342 441 299 438z"/>
                  <g class="contour" marker-start="url(#node)" marker-mid="url(#node)" marker-end="url(#node)">
                    <polyline class="edge" points="299.500,220.500 639.500,220.500 639.500,560.500 299.500,560.500 299.500,220.500"/>
                    <polyline points="299,276 343,263 358,259 374,255 398,254 422,255 441,256 470,258 501,263 521,266 541,268 576,264 611,255 640,246"/>
                    <polyline points="299,323 338,310 353,303 372,300 393,302 419,305 467,312 522,311 577,299 640,279"/>
                    <polyline points="299,392 311,389 323,382 330,369 333,353 335,337 339,330 345,323 353,319 367,317 384,318 415,327 429,331 443,333 459,333 476,331 494,328 517,329 537,337 552,353 556,366 557,382 549,420 543,431 535,442 526,450 509,460 491,465 476,468 461,468 447,466 425,462 406,455 374,445 342,441 299,438"/>
                    <polyline points="299,488 336,491 372,496 408,503 445,509 470,512 499,509 526,502 549,485 562,466 573,445 586,420 603,398 640,370"/>
                    <polyline points="299,523 344,525 401,535 439,547 469,561"/>
                    <polyline points="545,561 577,535 590,516 598,495 608,473 619,457 640,441"/>
                  </g>
                  <!-- second, smoothed survey lines -->
                  <path class="survey" d="M299 323C325 316 340 309 353 303M336 491C380 497 410 502 445 509M526 502C536 497 544 491 549 485M603 398L640 369M344 525C380 529 410 537 439 547M557 382C557 396 554 409 549 420"/>
                  <!-- house footprint -->
                  <path class="eaves" d="M407.500 358.500H499.500V389.500H482.500V423.500H407.500zM411.500 362.500H497.500M409.500 360.500V421.500M478.500 375.500H496M482.500 375.500V388"/>
                  <path class="walls" d="M411.500 419.500V362H480M480 361.500h17V387M480 386V419.500"/>
                  <path class="walls thin" d="M411 419.500H480"/>
                  <path class="glazing" d="M415 419.500H480M480 387.500H498" stroke-dasharray="7 4"/>
                  <path class="glazing" d="M498 369V387M441 419v-6c3 0 5 3 6 6M487 387c1-4 4-6 6-6v6"/>
                  <path class="hips" d="M413 364L440 391 413 419M413 391.500h3M440 391.500H479M443.500 363v4"/>
                  <path class="stairs" d="M481 392.500h17M481 396.500h17M481 400.500h17M481 404.500h17M481 408.500h17M481 412.500h17M481 416.500h17M481 420.500h17"/>
                  <path class="eaves" d="M498.500 388V421"/>
                  <path d="M423 390.500h9M427.500 386v9" stroke="#000"/>
                  <path d="M369 460h8v8h-8z" fill="#a9f9a9"/>
                  <path d="M370.500 461.500l5 5M375.500 461.500l-5 5" stroke="#000" stroke-width="1.500"/>
                </g>
              </svg>
              <div class="brand">
                <svg class="apple" viewBox="0 0 46 50" fill="none">
                  <path d="M23 11c-7-5-19-3-21 9-1 12 5 22 12 26 4 2 6 0 9 0s5 2 9 0c7-4 13-14 12-26-2-12-14-14-21-9z" stroke-width="2"/>
                  <path d="M23 15c-6-4-15-2-17 6-1 9 4 17 10 21 3 2 5 0 7 0s4 2 7 0c6-4 11-12 10-21-2-8-11-10-17-6z" stroke-width="1.500"/>
                  <path d="M23 19c-5-3-12-1-13 4-1 7 3 12 8 15 2 1 3 1 5 1s3 0 5-1c5-3 9-8 8-15-1-5-8-7-13-4z" stroke-width="1.500"/>
                  <path d="M23 23c-4-2-8-1-9 3 0 5 2 8 5 10 2 1 6 1 8 0 3-2 5-5 5-10-1-4-5-5-9-3z"/>
                  <circle cx="23" cy="30" r="3" fill="#b4b4b4"/>
                  <path d="M22 10C16 7 15 3 16 1c6 1 9 5 6 9z" stroke-width="1.500"/>
                </svg>
                <div class="brand-text"><span class="brand-name">Applecore<sup>™</sup></span><span class="brand-sub">Designs</span></div>
              </div>
            </div>
            <div class="vscroll"><span class="tri-up"></span><span class="thumb"></span><span class="tri-down small"></span></div>
          </div>
          <div class="bottombar">
            <button class="bb on" aria-label="Trace reference"><svg><use href="#b-trace"/></svg></button>
            <button class="bb" aria-label="Zoom window"><svg><use href="#b-zoomwin"/></svg></button>
            <button class="bb on" aria-label="Quick options"><svg><use href="#b-quick"/></svg></button>
            <button class="btn value scale">1:50</button>
            <button class="btn value zoom">15 %</button>
            <button class="btn value pop" aria-label="Zoom presets"><span class="tri-right"></span></button>
            <button class="bb" aria-label="Zoom"><svg><use href="#b-zoom"/></svg></button>
            <button class="bb" aria-label="Zoom in"><svg><use href="#b-in"/></svg></button>
            <button class="bb" aria-label="Zoom out"><svg><use href="#b-out"/></svg></button>
            <button class="bb" aria-label="Pan"><svg><use href="#b-pan"/></svg></button>
            <button class="bb" aria-label="Fit in window"><svg><use href="#b-fit"/></svg></button>
            <button class="bb" aria-label="Set orientation"><svg><use href="#b-rot"/></svg></button>
            <button class="btn value zoom">0.00°</button>
            <button class="bb" aria-label="Previous zoom"><svg><use href="#b-prev"/></svg></button>
            <button class="bb" aria-label="Next zoom" disabled><svg><use href="#b-next"/></svg></button>
            <div class="hscroll"><span class="tri-left"></span><span class="thumb"></span><span class="tri-right small"></span></div>
          </div>
        </section>

        <aside class="navigator">
          <div class="panel-title"><h2>Navigator - View Map</h2><span class="tri-down"></span><button class="close" aria-label="Close navigator"></button></div>
          <div class="nav-tabs">
            <button class="export" aria-label="Project chooser"><svg><use href="#n-out"/></svg><span class="tri-right"></span></button>
            <button class="tab" aria-label="Project map"><svg><use href="#n-house"/></svg></button>
            <button class="tab on" aria-label="View map"><svg><use href="#n-viewmap"/></svg></button>
            <button class="tab" aria-label="Layout book"><svg><use href="#n-layout"/></svg></button>
            <button class="tab" aria-label="Publisher sets"><svg><use href="#n-pub"/></svg></button>
          </div>
          <div class="tree">
            <button class="toggle minus" aria-label="Collapse"></button><a class="node root" href="#"><svg><use href="#n-house"/></svg>OFFSET in ArchiCAD</a>
            <ul>
              <li><button class="toggle" aria-label="Expand"></button><a class="node" href="#"><svg><use href="#n-folder"/></svg>Feasibility</a></li>
              <li><button class="toggle" aria-label="Expand"></button><a class="node" href="#"><svg><use href="#n-folder"/></svg>Planning</a></li>
              <li><button class="toggle" aria-label="Expand"></button><a class="node" href="#"><svg><use href="#n-folder"/></svg>Construction</a></li>
              <li><button class="toggle" aria-label="Expand"></button><a class="node" href="#"><svg><use href="#n-folder"/></svg>As Built</a></li>
              <li><a class="node" href="#"><svg><use href="#n-sched"/></svg>ADL Door Schedule</a></li>
              <li><a class="node" href="#"><svg><use href="#n-sched"/></svg>ADL Window Schedule</a></li>
              <li><a class="node" href="#"><svg><use href="#n-sched"/></svg>ADL Fill Areas</a></li>
              <li><a class="node" href="#"><svg><use href="#n-sched"/></svg>ADL Zone Summary</a></li>
              <li><a class="node" href="#"><svg><use href="#n-sheet"/></svg>ADL Drawing Issue Sheet</a></li>
              <li><button class="toggle minus" aria-label="Collapse"></button><a class="node root" href="#"><svg><use href="#n-folder"/></svg>APPLECORE DESIGNS</a>
                <ul>
                  <li><a class="node" href="#"><svg><use href="#n-view"/></svg>INTRO</a></li>
                  <li><a class="node" href="#"><svg><use href="#n-view"/></svg>---------------------------</a></li>
                  <li><a class="node" href="#"><svg><use href="#n-view"/></svg><span class="selected">01 - Imported survey</span></a></li>
                  <li><a class="node" href="#"><svg><use href="#n-view"/></svg>02 - Ground Floor Plan</a></li>
                  <li><a class="node" href="#"><svg><use href="#n-view"/></svg>03 - Terrain</a></li>
                </ul>
              </li>
            </ul>
          </div>
          <div class="tree-actions">
            <button aria-label="Save current view"><svg><use href="#n-new1"/></svg></button>
            <button aria-label="Clone folder"><svg><use href="#n-new2"/></svg></button>
            <button aria-label="New folder"><svg><use href="#n-new3"/></svg></button>
            <button aria-label="View shortcut"><svg><use href="#n-new4"/></svg></button>
            <button aria-label="Delete"><svg><use href="#n-del"/></svg></button>
          </div>
          <div class="properties">
            <h3><span class="tri-down"></span>Properties</h3>
            <div class="prop name"><svg><use href="#n-view"/></svg><input class="id" type="text" aria-label="View ID"><input type="text" aria-label="View name" value="01 - Imported survey"></div>
            <div class="prop"><svg><use href="#q-layer"/></svg><input type="text" aria-label="Layer combination" value="Custom" readonly></div>
            <div class="prop"><svg><use href="#q-scale"/></svg><input type="text" aria-label="Scale" value="1:50" readonly></div>
            <div class="prop"><svg><use href="#q-model"/></svg><input type="text" aria-label="Model view options" value="04 GA Plans" readonly></div>
            <button class="btn settings">Settings...</button>
          </div>
          <div class="quick">
            <div class="panel-title"><h2>Quick Options</h2><span class="tri-down"></span><button class="close" aria-label="Close quick options"></button></div>
            <div class="opt"><svg><use href="#q-layer"/></svg><button class="btn">Custom<span class="tri-right"></span></button></div>
            <div class="opt"><svg><use href="#q-scale"/></svg><button class="btn">1:50<span class="tri-right"></span></button></div>
            <div class="opt"><svg><use href="#q-struct"/></svg><button class="btn">Entire Structure<span class="tri-right"></span></button></div>
            <div class="opt"><svg><use href="#q-pen"/></svg><button class="btn">03 - ArchiCAD 13 pens<span class="tri-right"></span></button></div>
            <div class="opt"><svg><use href="#q-model"/></svg><button class="btn">04 GA Plans<span class="tri-right"></span></button></div>
            <div class="opt"><svg><use href="#q-dim"/></svg><button class="btn">Plain Meter<span class="tri-right"></span></button></div>
          </div>
        </aside>
      </div>
    </div>
  </div>

  <footer class="statusbar"><span class="orb"></span></footer>
</body>
</html>
```
FILE: styles.css
```css
* {
  box-sizing: border-box;
}
body {
  margin: 0;
  min-height: 100vh;
  display: flex;
  flex-direction: column;
  background: #efeeee;
  color: #1c1c1c;
  font-family: "Open Sans", "Liberation Sans", sans-serif;
  font-size: 9px;
  line-height: 12px;
}
h1, h2, h3, p, ul {
  margin: 0;
  padding: 0;
  font-size: inherit;
  font-weight: normal;
}
ul {
  list-style: none;
}
a {
  color: inherit;
  text-decoration: none;
}
button {
  display: flex;
  align-items: center;
  justify-content: center;
  flex-shrink: 0;
  margin: 0;
  padding: 0;
  border: 0;
  background: none;
  color: inherit;
  font: inherit;
}
input, select {
  min-width: 0;
  margin: 0;
  border: 0;
  border-radius: 0;
  color: inherit;
  font: inherit;
}
svg {
  flex-shrink: 0;
}
.sprite {
  position: absolute;
}
.glyph-sm, .glyph-md, .glyph-lg {
  font-family: "Liberation Serif", serif;
  font-weight: bold;
  fill: #22225c;
}
.glyph-sm { font-size: 7px; }
.glyph-md { font-size: 10px; }
.glyph-lg { font-size: 16px; }

/* little triangles */
.tri-down, .tri-up, .tri-left, .tri-right {
  flex-shrink: 0;
  width: 0;
  height: 0;
  border: 4px solid transparent;
}
.tri-down {
  border-top-color: #111;
  border-bottom: 0;
}
.tri-up {
  border-width: 3px;
  border-bottom-color: #555;
  border-top: 0;
}
.tri-right {
  border-width: 3px;
  border-left: 4px solid #111;
  border-right: 0;
}
.tri-left {
  border-width: 3px;
  border-right-color: #444;
  border-left: 0;
}
.tri-down.small {
  border-width: 3px;
  border-top-color: #555;
  border-bottom: 0;
}
.close {
  width: 9px;
  height: 9px;
  background:
    linear-gradient(45deg, transparent 40%, #111 40%, #111 60%, transparent 60%),
    linear-gradient(-45deg, transparent 40%, #111 40%, #111 60%, transparent 60%);
  background-size: 7px 7px;
  background-position: center;
  background-repeat: no-repeat;
}

/* title bar and menu */
.titlebar {
  display: flex;
  align-items: center;
  height: 16px;
  padding-left: 1px;
  background: #050505;
  border-bottom: 1px solid #777;
  color: #fff;
}
.app-icon {
  width: 14px;
  height: 13px;
  margin-right: 3px;
}
.titlebar h1 {
  flex: 1;
  font-family: Roboto, "Liberation Sans", sans-serif;
  font-size: 10px;
  font-weight: 500;
  line-height: 15px;
  white-space: nowrap;
}
.win-buttons {
  display: flex;
  align-self: flex-start;
  margin-right: 3px;
}
.win {
  width: 21px;
  height: 13px;
  background: linear-gradient(#8a8a8a, #3a3a3a 50%, #222 50%, #444);
  border: 1px solid #777;
  border-top: 0;
}
.win svg {
  width: 12px;
  height: 10px;
}
.win-close {
  width: 36px;
  background: linear-gradient(#d08a80, #a83226 50%, #8c1a10 50%, #b8503a);
}
.menubar {
  display: flex;
  align-items: center;
  gap: 10px;
  height: 17px;
  padding: 0 4px 0 7px;
  background: linear-gradient(#fbfcfe, #eef1f8 40%, #d5dcec 42%, #dde3f1);
  border-bottom: 1px solid #b8b8b8;
  font-size: 10px;
  line-height: 16px;
}
.doc-icon {
  width: 12px;
  height: 11px;
  margin-right: -4px;
}
.mdi {
  display: flex;
  gap: 2px;
  margin-left: auto;
}
.mdi svg {
  width: 10px;
  height: 10px;
}

/* main toolbar */
.toolbar {
  display: flex;
  align-items: center;
  height: 28px;
  padding-left: 5px;
  background: #f0efef;
  border-bottom: 1px solid #bdbdbd;
  overflow: hidden;
}
.tb {
  width: 19px;
  height: 22px;
}
.tb svg {
  width: 16px;
  height: 16px;
}
.tb.big {
  width: 24px;
}
.tb.big svg, .wide .tb svg {
  width: 18px;
}
.drop {
  width: 13px;
  height: 22px;
}
.drop::after {
  content: "";
  border: 3px solid transparent;
  border-top: 4px solid #222;
  border-bottom: 0;
}
.drop:disabled::after {
  border-top-color: #888;
}
.drop.slim {
  width: 8px;
}
.drop.loose {
  width: 16px;
}
.sep {
  flex-shrink: 0;
  width: 1px;
  height: 24px;
  margin: 0 3px;
  background: #a5a5a5;
}
.grip {
  flex-shrink: 0;
  width: 3px;
  height: 24px;
  margin: 0 2px 0 4px;
  border-left: 1px dotted #999;
  border-right: 1px dotted #999;
}
.split {
  display: flex;
  flex-shrink: 0;
  margin-right: 2px;
}
.split .tb {
  width: 22px;
  border: 1px solid #8b8b8b;
  border-radius: 2px 0 0 2px;
  background: #dcdcdc;
}
.split .drop {
  border: 1px solid #8b8b8b;
  border-left: 0;
  border-radius: 0 2px 2px 0;
  background: #e6e6e6;
}
.split.wide .tb {
  width: 26px;
}
.on {
  background: #d8d8d8;
  border: 1px solid #777;
  border-radius: 2px;
}
.go {
  width: 15px;
  font-size: 10px;
}

/* workspace */
.workspace {
  flex: 1;
  display: flex;
}
.toolbox {
  display: flex;
  flex-direction: column;
  flex-shrink: 0;
  width: 76px;
  padding-top: 1px;
  border-left: 1px solid #999;
  background: #ededed;
}
.panel-title {
  display: flex;
  align-items: center;
  gap: 6px;
  height: 11px;
  padding: 0 2px;
  background: #8ba7c5;
  font-family: "Liberation Sans", sans-serif;
  font-size: 10px;
  line-height: 11px;
}
.panel-title h2 {
  flex: 1;
  font-weight: bold;
}
.tool-head {
  display: flex;
  align-items: center;
  gap: 5px;
  height: 14px;
  padding-left: 7px;
  background: #f7f7f7;
  border-bottom: 1px solid #b5b5b5;
}
.tool-head.first {
  height: 15px;
  padding-left: 20px;
}
.tool-head.more {
  gap: 7px;
  margin-top: auto;
  border-bottom: 0;
}
.tool {
  justify-content: flex-start;
  gap: 2px;
  width: 74px;
  height: 20px;
  padding-left: 4px;
  white-space: nowrap;
}
.tool svg {
  width: 22px;
  height: 18px;
}
.tool.active {
  height: 18px;
  margin: 1px 0;
  padding-left: 3px;
  border: 1px solid #666;
  border-radius: 2px;
  background: #f4f4f4;
}
.tool-scroll {
  display: flex;
  justify-content: space-between;
  padding-right: 1px;
}
.tool-list {
  width: 68px;
  overflow: hidden;
}
.vscroll {
  display: flex;
  flex-direction: column;
  align-items: center;
  flex-shrink: 0;
  width: 14px;
  padding: 8px 0 4px;
  background: #f3f3f3;
}
.vscroll .thumb {
  width: 12px;
  height: 344px;
  margin: 95px 0 auto;
  border: 1px solid #a5a5a5;
  background:
    repeating-linear-gradient(#777 0 1px, transparent 1px 2px) center / 5px 6px no-repeat,
    linear-gradient(90deg, #f4f4f4, #d2d2d2);
}
.vscroll.mini {
  width: 6px;
  padding: 6px 0 0;
}
.vscroll.mini .thumb {
  width: 6px;
  height: auto;
  flex: 1;
  margin: 22px 0 4px;
  background: linear-gradient(90deg, #f4f4f4, #d2d2d2);
}

/* info box */
.main {
  flex: 1;
  min-width: 0;
  display: flex;
  flex-direction: column;
  margin-left: 3px;
}
.infobox {
  display: flex;
  align-items: center;
  height: 36px;
  padding-top: 2px;
  overflow: hidden;
}
.strip {
  flex-shrink: 0;
  align-self: flex-start;
  width: 11px;
  height: 30px;
  margin-left: 1px;
  padding: 1px;
  background: #8ba7c5;
  border-bottom: 1px solid #111;
}
.counts {
  width: 102px;
  padding: 4px 0 0 2px;
  font-family: "Liberation Sans", sans-serif;
  font-size: 8px;
  font-weight: bold;
  line-height: 10px;
}
.btn {
  height: 22px;
  border: 1px solid #8a8a8a;
  border-radius: 2px;
  background: linear-gradient(#f2f2f2, #e9e9e9 50%, #d8d8d8 50%, #cdcdcd);
  white-space: nowrap;
}
.btn.default {
  width: 30px;
  border: 1px solid #3aa6d0;
  background: #d8ecf6;
  box-shadow: inset 0 0 0 1px #8fdcf5;
}
.default svg {
  width: 22px;
  height: 16px;
}
.vsep {
  flex-shrink: 0;
  width: 1px;
  height: 31px;
  margin: 0 2px;
  background: #b0b0b0;
}
.wand {
  width: 25px;
  margin-right: 2px;
}
.wand svg {
  width: 16px;
  height: 16px;
}
.layer {
  gap: 3px;
  width: 104px;
  padding-left: 5px;
}
.layer svg {
  width: 14px;
  height: 10px;
}
.layer .tri-right {
  margin: 0 4px 5px auto;
}
.geometry {
  display: flex;
  gap: 1px;
  padding: 0 0 0 5px;
}
.surface {
  padding: 0 34px 0 2px;
}
.shape {
  width: 32px;
  height: 21px;
}
.shape svg {
  width: 18px;
  height: 16px;
}
.section {
  width: 131px;
}
.block {
  width: 26px;
  height: 20px;
  margin: 0 4px 8px 20px;
}
.levels {
  display: grid;
  grid-template-columns: 16px 65px;
  gap: 3px 0;
  font-family: "Liberation Sans", sans-serif;
  line-height: 12px;
}
.levels label {
  font-size: 8px;
  font-weight: bold;
}
.levels input {
  height: 12px;
  padding: 0 2px;
  background: #fff;
}
.story {
  align-self: flex-start;
}
.story label {
  display: block;
  font-family: "Liberation Sans", sans-serif;
  font-size: 8px;
  font-weight: bold;
  line-height: 10px;
}
.select-wrap {
  position: relative;
}
.select-wrap::after {
  content: "";
  position: absolute;
  right: 3px;
  top: 7px;
  border: 3px solid transparent;
  border-top: 4px solid #111;
  border-bottom: 0;
}
.select-wrap select {
  display: block;
  appearance: none;
  width: 131px;
  height: 18px;
  padding: 0 5px;
  background: #fff;
}

/* drawing view */
.stage {
  flex: 1;
  display: flex;
  min-height: 0;
}
.view {
  flex: 1;
  min-width: 0;
  display: flex;
  flex-direction: column;
  border-top: 1px solid #777;
  border-left: 1px solid #777;
}
.view-row {
  flex: 1;
  display: flex;
}
.canvas {
  position: relative;
  flex: 1;
  background: #fcfcfc;
}
.plan {
  position: absolute;
  width: 100%;
  height: 100%;
}
.terrain {
  fill: #78fb78;
}
.plateau {
  fill: #66e877;
}
.contour {
  stroke: #1f9a24;
}
.contour .edge {
  stroke: #4c9a30;
}
.survey {
  stroke: #3aa63a;
}
.eaves {
  stroke: #3bb045;
}
.walls {
  stroke: #16761f;
  stroke-width: 2;
}
.walls.thin {
  stroke-width: 1;
}
.glazing {
  stroke: #a3a31a;
}
.hips {
  stroke: #35a545;
}
.stairs {
  stroke: #16a62a;
}
.brand {
  position: absolute;
  left: 9px;
  bottom: 2px;
  display: flex;
  width: 203px;
  height: 60px;
  padding: 2px 0 0 9px;
  border: 2px solid #cbcbcb;
  border-radius: 6px;
}
.apple {
  width: 46px;
  height: 50px;
  stroke: #b4b4b4;
}
.brand-text {
  display: flex;
  flex-direction: column;
  margin: 1px 0 0 6px;
  padding-left: 7px;
  border-left: 1px dotted #bbb;
  color: #a8a8a8;
  font-family: Lato, sans-serif;
}
.brand-name {
  font-size: 25px;
  line-height: 30px;
}
.brand-name sup {
  font-size: 6px;
  line-height: 6px;
  vertical-align: 12px;
}
.brand-sub {
  font-size: 18px;
  line-height: 22px;
}
.bottombar {
  display: flex;
  align-items: center;
  height: 15px;
}
.bb {
  width: 20px;
  height: 14px;
}
.bb svg {
  width: 16px;
  height: 13px;
}
.value {
  height: 13px;
  margin-left: 1px;
  font-family: "Liberation Sans", sans-serif;
}
.scale {
  width: 52px;
}
.zoom {
  width: 60px;
}
.pop {
  width: 18px;
  margin-right: 1px;
}
.hscroll {
  flex: 1;
  display: flex;
  align-items: center;
  padding: 0 18px 0 6px;
}
.hscroll .thumb {
  width: 181px;
  height: 12px;
  margin: 0 auto 0 110px;
  border: 1px solid #a5a5a5;
  background:
    repeating-linear-gradient(90deg, #777 0 1px, transparent 1px 2px) center / 6px 5px no-repeat,
    linear-gradient(#f4f4f4, #d2d2d2);
}

/* navigator */
.navigator {
  display: flex;
  flex-direction: column;
  flex-shrink: 0;
  width: 182px;
  margin-left: 3px;
  padding: 1px 2px 3px 1px;
  border-left: 1px solid #aaa;
}
.nav-tabs {
  display: flex;
  align-items: center;
  height: 26px;
  padding: 0 1px;
}
.export {
  width: 24px;
  height: 18px;
  margin-right: auto;
  border: 1px solid #999;
  background: #f8f8f8;
}
.nav-tabs svg {
  width: 16px;
  height: 16px;
}
.tab {
  width: 26px;
  height: 20px;
}
.tab:last-child {
  width: 24px;
}
.tree {
  flex: 1;
  padding-left: 7px;
  border-top: 1px solid #999;
  border-bottom: 1px solid #999;
  background: #fdfdfd;
}
.tree ul {
  margin-left: 4px;
  padding: 0 0 0 15px;
}
.tree ul ul {
  padding-left: 12px;
}
.tree li {
  position: relative;
}
/* dotted connector lines */
.tree li::before {
  content: "";
  position: absolute;
  left: 0;
  top: 6px;
  width: 8px;
  border-top: 1px dotted #999;
}
.tree li::after {
  content: "";
  position: absolute;
  left: 0;
  top: -6px;
  height: 13px;
  border-left: 1px dotted #999;
}
.node {
  display: flex;
  align-items: center;
  gap: 3px;
  height: 13px;
  padding-left: 9px;
  white-space: nowrap;
}
.node.root {
  height: 14px;
}
.tree > .node {
  padding-left: 0;
}
.node svg {
  width: 13px;
  height: 12px;
}
.selected {
  margin-left: -1px;
  outline: 1px solid #5fb4e4;
  background: #f2f9fe;
  line-height: 11px;
}
.toggle {
  position: relative;
  z-index: 1;
  float: left;
  width: 8px;
  height: 8px;
  margin: 3px -4px 0 -4px;
  border: 1px solid #97a5b5;
  background:
    linear-gradient(#345, #345) center / 4px 1px no-repeat,
    linear-gradient(#345, #345) center / 1px 4px no-repeat,
    #f4f6f8;
}
.tree > .toggle {
  margin: 3px 4px 0 0;
}
.toggle.minus {
  background:
    linear-gradient(#345, #345) center / 4px 1px no-repeat,
    #f4f6f8;
}
.tree-actions {
  display: flex;
  justify-content: flex-end;
  gap: 2px;
  height: 28px;
  padding-top: 7px;
}
.tree-actions button {
  width: 17px;
  height: 18px;
  border: 1px solid #9a9a9a;
  background: #f3f3f3;
}
.tree-actions svg {
  width: 15px;
  height: 15px;
}
.properties {
  padding-bottom: 6px;
  border-bottom: 1px solid #b0b0b0;
  font-family: "Liberation Sans", sans-serif;
}
.properties h3 {
  display: flex;
  align-items: center;
  gap: 7px;
  height: 18px;
  padding-left: 10px;
}
.prop {
  display: flex;
  align-items: center;
  height: 15px;
}
.prop svg, .opt svg {
  width: 9px;
  height: 9px;
  margin: 0 1px 0 1px;
}
.prop input {
  flex: 1;
  height: 14px;
  padding: 0 1px;
  border: 1px solid #b5b5b5;
  border-right: 0;
  border-bottom: 0;
  background: #ececec;
}
.prop.name {
  height: 17px;
}
.prop.name input {
  height: 15px;
  padding-left: 4px;
  border: 0;
  background: #fff;
}
.prop.name .id {
  flex: 0 0 36px;
  margin-right: 1px;
}
.settings {
  width: 156px;
  height: 18px;
  margin: 3px 0 0 11px;
}
.quick {
  margin-top: 3px;
}
.opt {
  display: flex;
  align-items: center;
  height: 15px;
}
.opt .btn {
  flex: 1;
  justify-content: space-between;
  height: 14px;
  padding: 0 3px;
}

.statusbar {
  height: 20px;
  overflow: hidden;
  padding: 16px 0 0 16px;
  border-top: 1px solid #8c8c8c;
  background: #e8e6e7;
}
.orb {
  display: block;
  width: 16px;
  height: 16px;
  border-radius: 50%;
  border: 1px solid #8ba3b5;
  background: #c9d8e2;
}
```
